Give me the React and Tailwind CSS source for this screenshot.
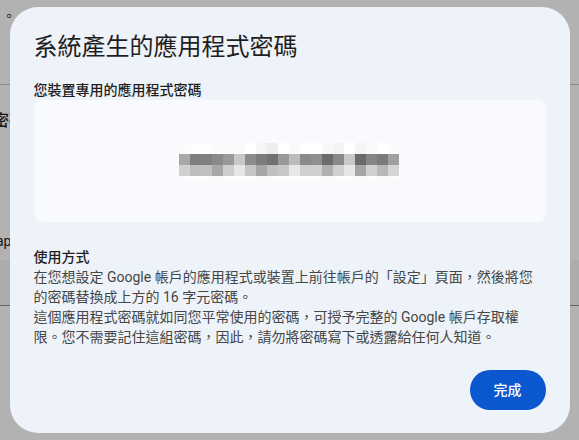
import React from 'react';

const FONT = "font-['Roboto','Noto_Sans_CJK_TC','Noto_Sans',sans-serif]";

// pixelated (blurred) password preview, one row per array
const PIXELS = [
  ['#fbfbfb', '#fdfdfd', '#fdfdfd', '#fbfbfb', '#f9f9f9', '#f8f9fd', '#ffffff', '#f5f5f5', '#eeeeee', '#ffffff', '#fafafa', '#ffffff', '#ffffff', '#f8f8f8', '#f4f4f4', '#ffffff', '#f4f4f4', '#fafafa', '#ffffff', '#fbfbfb'],
  ['#a8a8a8', '#7e7e7e', '#808080', '#8a8a8a', '#999999', '#c8c8c8', '#8c8c8c', '#7c7c7c', '#717171', '#999999', '#bcbcbc', '#8a8a8a', '#909090', '#6c6c6c', '#888888', '#c8c8c8', '#6a6a6a', '#858585', '#7b7b7b', '#a0a0a0'],
  ['#d0d0d0', '#bdbdbd', '#c0c0c0', '#a8a8a8', '#cdcdcd', '#e6e6e6', '#c5c5c5', '#a6a6a6', '#c0c0c0', '#c8c8c8', '#e8e8e8', '#cfcfcf', '#cfcfcf', '#b0b0b0', '#d0d0d0', '#e6e6e6', '#a5a5a5', '#d0d0d0', '#b8b8b8', '#d5d5d5'],
  ['#fcfcfc', '#fcfcfc', '#fcfcfc', '#fafafa', '#fcfcfc', '#fdfdfd', '#fcfcfc', '#fafafa', '#fcfcfc', '#fcfcfc', '#fdfdfd', '#fcfcfc', '#fcfcfc', '#fafafa', '#fcfcfc', '#fdfdfd', '#fafafa', '#fcfcfc', '#fbfbfb', '#fcfcfc'],
];

const ROW_H = ['h-[11px]', 'h-[11px]', 'h-[11px]', 'h-[4px]'];

const BlurredPassword = () => (
  <div className="flex flex-col">
    {PIXELS.map((row, r) => (
      <div key={r} className={`flex ${ROW_H[r]}`}>
        {row.map((c, i) => (
          <div key={i} className="w-[11px] h-full" style={{ backgroundColor: c }} />
        ))}
      </div>
    ))}
  </div>
);

// the settings page behind the scrim, only a sliver shows on the left
const BackgroundPage = () => (
  <div className={`min-h-[440px] bg-white text-[#1f1f1f] ${FONT}`}>
    <div className="h-[85px] border-b border-[#c7c7c7] pt-[6px] pl-[2px] text-sm">。</div>
    <div className="h-[145px] pt-[24px] -ml-[7px] text-base font-medium">密碼</div>
    <div className="h-[30px] -ml-[4px] pt-[1px] text-sm">ap</div>
    <div className="h-[46px] bg-[#f6f6f6] border-b border-[#8e8e8e]" />
  </div>
);

export default function App() {
  return (
    <div className="relative w-full min-h-[440px] overflow-hidden">
      <BackgroundPage />
      <div className="fixed inset-0 bg-black/30 flex justify-center items-start pt-[7px]">
        <div className={`w-[560px] h-[426px] rounded-[28px] bg-[#eef2f9] px-6 pt-6 pb-[23px] flex flex-col ${FONT}`}>
          <h2 className="text-[24px] leading-8 text-[#1f1f1f]">系統產生的應用程式密碼</h2>

          <div className="mt-[17px] text-sm leading-5 font-medium text-[#1f1f1f]">您裝置專用的應用程式密碼</div>

          <div className="mt-[0px] h-[122px] rounded-lg bg-[#f8fafd] flex items-center justify-center">
            <div className="-ml-[1px] mt-[1px]">
              <BlurredPassword />
            </div>
          </div>

          <div className="mt-[25px] text-sm leading-5 text-[#444746]">
            <div className="font-medium text-[#1f1f1f]">使用方式</div>
            <p>
              在您想設定 Google 帳戶的應用程式或裝置上前往帳戶的「設定」頁面，然後將您
              <br />
              的密碼替換成上方的 16 字元密碼。
            </p>
            <p>
              這個應用程式密碼就如同您平常使用的密碼，可授予完整的 Google 帳戶存取權
              <br />
              限。您不需要記住這組密碼，因此，請勿將密碼寫下或透露給任何人知道。
            </p>
          </div>

          <div className="mt-auto flex justify-end">
            <button className="h-10 w-[76px] rounded-full bg-[#0b57d0] text-white text-sm font-medium">完成</button>
          </div>
        </div>
      </div>
    </div>
  );
}
